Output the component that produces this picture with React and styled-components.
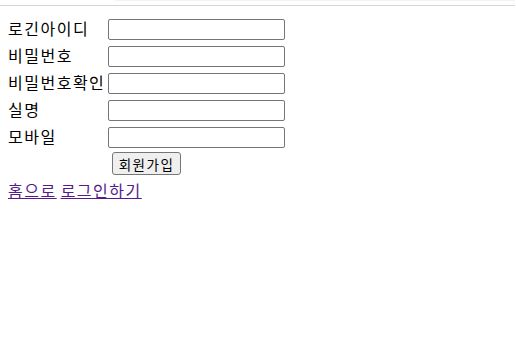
import React from "react";
import styled, { createGlobalStyle } from "styled-components";

const Global = createGlobalStyle`
  html, body {
    margin: 0;
    padding: 0;
    background: #fff;
  }
  body {
    font-family: "Liberation Sans", "Noto Sans CJK KR", sans-serif;
    font-size: 16px;
    color: #000;
  }
`;

const TopStrip = styled.div`
  height: 1px;
  margin-left: 115px;
  width: 400px;
  background: #f3f3f3;
`;

const TopRule = styled.div`
  height: 1px;
  width: 515px;
  margin-top: 4px;
  background: #d6d6d6;
`;

const Page = styled.div`
  padding: 13px 8px 0 8px;
`;

const Form = styled.form`
  display: grid;
  grid-template-columns: 100px 177px;
  row-gap: 6px;
  align-items: center;
`;

const Label = styled.label`
  line-height: 21px;
  white-space: nowrap;
  letter-spacing: 1.5px;
`;

const Input = styled.input`
  box-sizing: border-box;
  width: 177px;
  height: 21px;
  margin: 0;
  padding: 1px 2px;
  border: 1px solid #767676;
  border-radius: 2px;
  background: #fff;
  font-size: 13.33px;
`;

const Actions = styled.div`
  grid-column: 2;
  padding-left: 4px;
  margin-top: -2px;
`;

const Button = styled.button`
  box-sizing: border-box;
  width: 69px;
  height: 23px;
  margin: 0;
  padding: 0;
  border: 1px solid #767676;
  border-radius: 3px;
  background: #efefef;
  font-family: "Liberation Sans", "Noto Sans CJK KR", sans-serif;
  font-size: 13.5px;
  letter-spacing: 1.5px;
  color: #000;
`;

const Links = styled.p`
  margin: 7px 0 0 0;
  line-height: 20px;
  letter-spacing: 1.5px;
  word-spacing: -2px;
`;

const Link = styled.a`
  color: #551a8b;
  text-decoration: underline;
`;

const fields = [
  { id: "userid", label: "로긴아이디", type: "text" },
  { id: "pw", label: "비밀번호", type: "password" },
  { id: "pw2", label: "비밀번호확인", type: "password" },
  { id: "name", label: "실명", type: "text" },
  { id: "mobile", label: "모바일", type: "text" },
];

export default function App() {
  return (
    <>
      <Global />
      <TopStrip />
      <TopRule />
      <Page>
        <Form onSubmit={(e) => e.preventDefault()}>
          {fields.map((f) => (
            <React.Fragment key={f.id}>
              <Label htmlFor={f.id}>{f.label}</Label>
              <Input id={f.id} type={f.type} />
            </React.Fragment>
          ))}
          <Actions>
            <Button type="submit">회원가입</Button>
          </Actions>
        </Form>
        <Links>
          <Link href="#home">홈으로</Link> <Link href="#login">로그인하기</Link>
        </Links>
      </Page>
    </>
  );
}
